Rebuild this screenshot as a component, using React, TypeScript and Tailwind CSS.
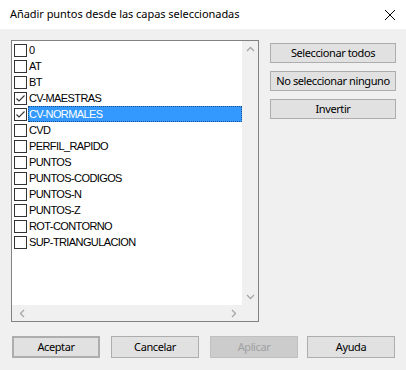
import React from "react";

const items: { name: string; checked: boolean; selected?: boolean }[] = [
  { name: "0", checked: false },
  { name: "AT", checked: false },
  { name: "BT", checked: false },
  { name: "CV-MAESTRAS", checked: true },
  { name: "CV-NORMALES", checked: true, selected: true },
  { name: "CVD", checked: false },
  { name: "PERFIL_RAPIDO", checked: false },
  { name: "PUNTOS", checked: false },
  { name: "PUNTOS-CODIGOS", checked: false },
  { name: "PUNTOS-N", checked: false },
  { name: "PUNTOS-Z", checked: false },
  { name: "ROT-CONTORNO", checked: false },
  { name: "SUP-TRIANGULACION", checked: false },
];

function Check({ checked }: { checked: boolean }) {
  return (
    <div className="w-[13px] h-[13px] border border-[#333333] bg-white shrink-0 relative">
      {checked && (
        <svg width="11" height="11" viewBox="0 0 11 11" className="absolute left-0 top-0">
          <path d="M1.5 5.5 L4 8 L9.5 2.5" fill="none" stroke="#333" strokeWidth="1.1" />
        </svg>
      )}
    </div>
  );
}

function Chevron({ d }: { d: string }) {
  return (
    <svg width="9" height="9" viewBox="0 0 9 9">
      <path d={d} fill="none" stroke="#a6a6a6" strokeWidth="1.3" />
    </svg>
  );
}

function Btn({ children, className = "" }: { children: React.ReactNode; className?: string }) {
  return (
    <div
      className={
        "flex items-center justify-center whitespace-nowrap border border-[#adadad] bg-[#e1e1e1] text-[11px] tracking-[-0.4px] text-black " +
        className
      }
    >
      {children}
    </div>
  );
}

export default function App() {
  const font = { fontFamily: '"Noto Sans", "Open Sans", sans-serif' };
  return (
    <div className="w-[406px] h-[370px] bg-[#f0f0f0] flex flex-col overflow-hidden" style={font}>
      <div className="h-[29px] bg-white flex items-center justify-between pl-[10px] pr-[8px] shrink-0">
        <span className="text-[11px] tracking-[-0.05px] text-black">Añadir puntos desde las capas seleccionadas</span>
        <svg width="12" height="12" viewBox="0 0 12 12" className="mr-[2px]">
          <path d="M1 1 L11 11 M11 1 L1 11" stroke="#000" strokeWidth="1" />
        </svg>
      </div>
      <div className="flex pl-[11px] pt-[11px]">
        <div className="w-[248px] h-[282px] border border-[#828282] bg-white flex flex-col">
          <div className="flex flex-1 min-h-0">
            <div
              className="flex-1 flex flex-col pl-[2px] pt-[1px]"
              style={{ fontFamily: '"Liberation Sans", Arial, sans-serif' }}
            >
              {items.map((it) => (
                <div key={it.name} className="h-[16px] flex items-center">
                  <Check checked={it.checked} />
                  {it.selected ? (
                    <div className="flex-1 h-[16px] ml-[1px] bg-[#3399ff] border border-dotted border-[#1a4f8a] flex items-center text-white text-[11px] tracking-[-0.6px]">
                      {it.name}
                    </div>
                  ) : (
                    <span className="ml-[2px] text-[11px] text-black tracking-[-0.6px]">{it.name}</span>
                  )}
                </div>
              ))}
            </div>
            <div className="w-[16px] bg-[#f0f0f0] flex flex-col justify-between items-center py-[4px]">
              <Chevron d="M1 6 L4.5 2.5 L8 6" />
              <Chevron d="M1 3 L4.5 6.5 L8 3" />
            </div>
          </div>
          <div className="h-[16px] bg-[#f0f0f0] flex items-center justify-between pl-[6px] pr-[20px]">
            <Chevron d="M6 1 L2.5 4.5 L6 8" />
            <Chevron d="M3 1 L6.5 4.5 L3 8" />
          </div>
        </div>
        <div className="flex flex-col gap-[8px] ml-[11px] pt-[3px]">
          <Btn className="w-[126px] h-[20px]">Seleccionar todos</Btn>
          <Btn className="w-[126px] h-[20px]">No seleccionar ninguno</Btn>
          <Btn className="w-[126px] h-[20px]">Invertir</Btn>
        </div>
      </div>
      <div className="flex pl-[12px] pt-[14px]">
        <Btn className="w-[88px] h-[22px] border-2 border-[#0078d7]">Aceptar</Btn>
        <Btn className="w-[88px] h-[22px] ml-[11px]">Cancelar</Btn>
        <Btn className="w-[88px] h-[22px] ml-[11px] !bg-[#cccccc] !border-[#bfbfbf] !text-[#a0a0a0]">Aplicar</Btn>
        <Btn className="w-[88px] h-[22px] ml-[9px]">Ayuda</Btn>
      </div>
    </div>
  );
}
